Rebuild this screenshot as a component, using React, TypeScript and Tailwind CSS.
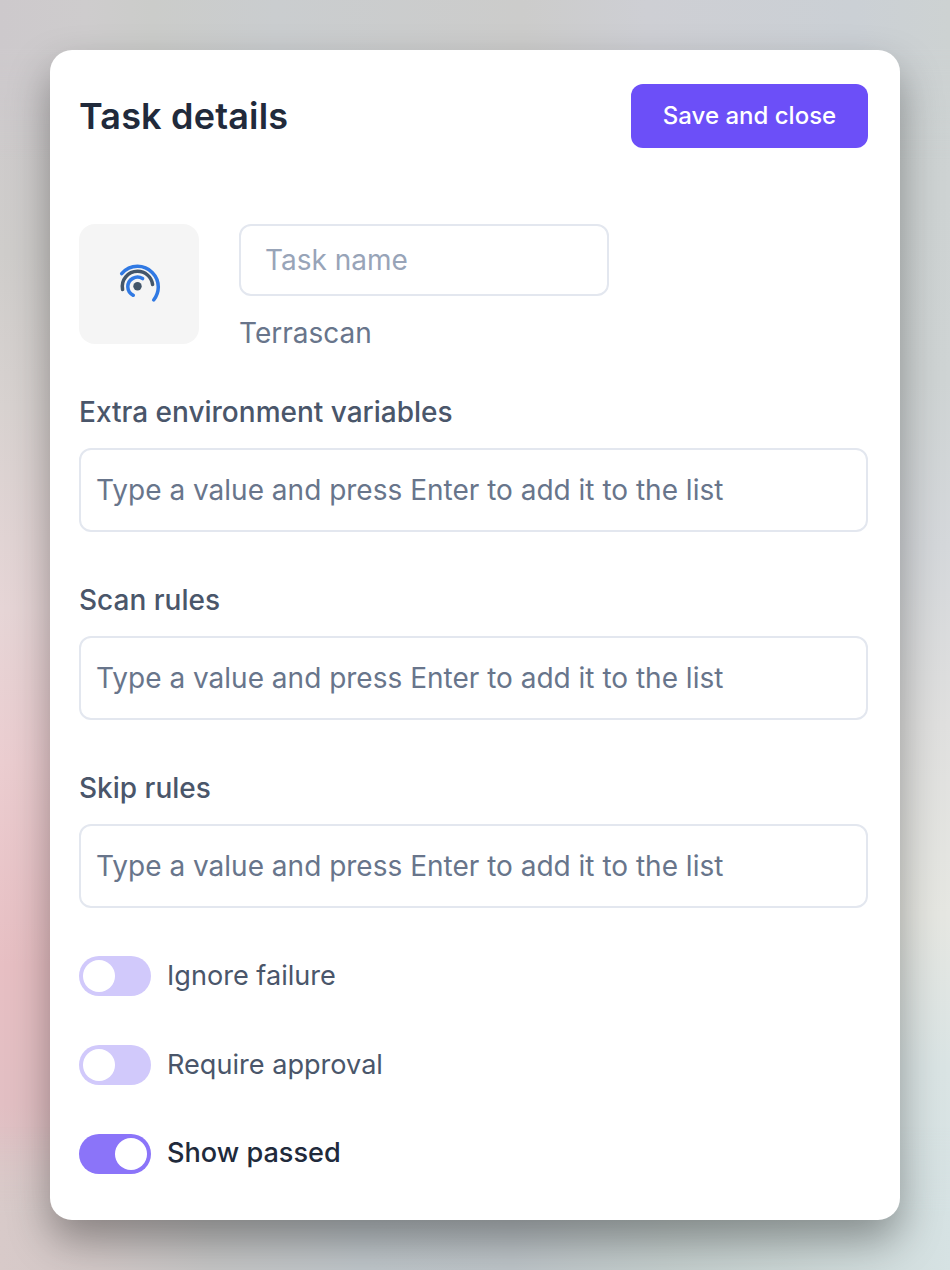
import { useState } from "react";

function TerrascanLogo() {
  return (
    <svg width="60" height="60" viewBox="0 0 60 60" fill="none" strokeWidth="3.5" strokeLinecap="round">
      <path d="M12.7 19.7A20.8 20.8 0 0 1 28.5 12.3A20.8 20.8 0 0 1 49.3 33.1A20.8 20.8 0 0 1 44.7 46" stroke="#3079e3" />
      <path d="M13.6 35.6A15.3 15.3 0 0 1 28.5 17.3A15.3 15.3 0 0 1 43.6 30.4" stroke="#43566a" />
      <path d="M33.6 24.6A9.7 9.7 0 0 0 18.8 32.8A9.7 9.7 0 0 0 24.3 41.3" stroke="#3079e3" />
      <circle cx="28.5" cy="32.2" r="4.2" fill="#43566a" />
    </svg>
  );
}

function ListField({ label }: { label: string }) {
  return (
    <label className="flex flex-col">
      <span className="h-10 text-[28px] leading-10 font-medium text-[#4a566a]">{label}</span>
      <input
        className="mt-4 h-[84px] w-full rounded-xl border-2 border-[#e3e7ef] pr-4 pl-[15px] text-[28px] text-[#68758b] outline-none placeholder:text-[#68758b]"
        placeholder="Type a value and press Enter to add it to the list"
      />
    </label>
  );
}

function Toggle({ label, initial = false }: { label: string; initial?: boolean }) {
  const [on, setOn] = useState(initial);
  return (
    <button type="button" role="switch" aria-checked={on} onClick={() => setOn(!on)} className="flex h-10 items-center gap-4">
      <span className={on ? "flex h-10 w-[72px] justify-end rounded-full bg-[#8b74f9] p-1" : "flex h-10 w-[72px] rounded-full bg-[#d1c9fb] p-1"}>
        <span className="size-8 rounded-full bg-white" />
      </span>
      <span className={on ? "pb-0.5 text-[27.1px] leading-10 font-medium text-[#212a3b]" : "text-[27.1px] leading-10 text-[#4a566a]"}>{label}</span>
    </button>
  );
}

function Backdrop() {
  return (
    <div className="absolute inset-0 bg-[linear-gradient(180deg,#cdc9cc_0%,#cfcdcb_20%,#d8d2d0_32%,#e6d5d6_48%,#ebcdd0_60%,#e7bfc3_76%,#e2bfc3_87%,#d8cac9_97%,#d8cac9_100%)]">
      <div className="absolute inset-0 bg-[linear-gradient(180deg,#cdd2d2_0%,#cfd4d4_30%,#d5d8db_43%,#e0e0df_57%,#e6e7e2_72%,#dae4e4_84%,#d6e2e3_100%)] [mask-image:linear-gradient(90deg,transparent_20%,black_90%)]" />
      <div className="absolute inset-x-0 top-0 h-40 bg-[linear-gradient(90deg,#cdc9cc_0%,#cecccd_9%,#cbccca_16%,#cacdcf_29%,#cccccb_55%,#cecfd4_68%,#cbd0d5_90%,#cdd2d2_100%)] [mask-image:linear-gradient(180deg,black_30%,transparent)]" />
      <div className="absolute inset-x-0 bottom-0 h-36 bg-[linear-gradient(90deg,#d8cac9_0%,#d2c8c7_10%,#c5c5c5_22%,#bec5c9_38%,#bdc4c8_54%,#c4cecd_70%,#cbd6d5_83%,#d6e2e3_100%)] [mask-image:linear-gradient(0deg,black_40%,transparent)]" />
    </div>
  );
}

export default function App() {
  return (
    <main className="relative h-[1270px] w-[950px] overflow-hidden p-[50px] font-['Inter',sans-serif]">
      <Backdrop />
      <section className="relative h-[1170px] w-[850px] rounded-[22px] bg-white pt-[34px] pr-8 pl-[29px] shadow-[0_20px_42px_rgba(0,0,0,0.35)]">
        <header className="flex h-16 items-center justify-between">
          <h1 className="text-[36px] leading-10 font-semibold tracking-[0.18px] text-[#212a3b]">Task details</h1>
          <button type="button" className="h-16 w-[237px] rounded-xl bg-[#6c4ff8] text-2xl font-medium text-white">Save and close</button>
        </header>
        <div className="mt-[76px] flex gap-10">
          <div className="flex size-[120px] items-center justify-center rounded-2xl bg-[#f5f5f5]">
            <TerrascanLogo />
          </div>
          <div className="flex flex-col">
            <input
              className="h-[72px] w-[370px] rounded-xl border-2 border-[#e3e7ef] px-6 text-[28px] outline-none placeholder:text-[#98a4b8]"
              placeholder="Task name"
            />
            <p className="mt-[17px] h-10 text-[28px] leading-10 text-[#68758b]">Terrascan</p>
          </div>
        </div>
        <div className="mt-[39px] flex flex-col gap-12">
          <ListField label="Extra environment variables" />
          <ListField label="Scan rules" />
          <ListField label="Skip rules" />
        </div>
        <div className="mt-12 flex flex-col gap-[49px]">
          <Toggle label="Ignore failure" />
          <Toggle label="Require approval" />
          <Toggle label="Show passed" initial />
        </div>
      </section>
    </main>
  );
}
